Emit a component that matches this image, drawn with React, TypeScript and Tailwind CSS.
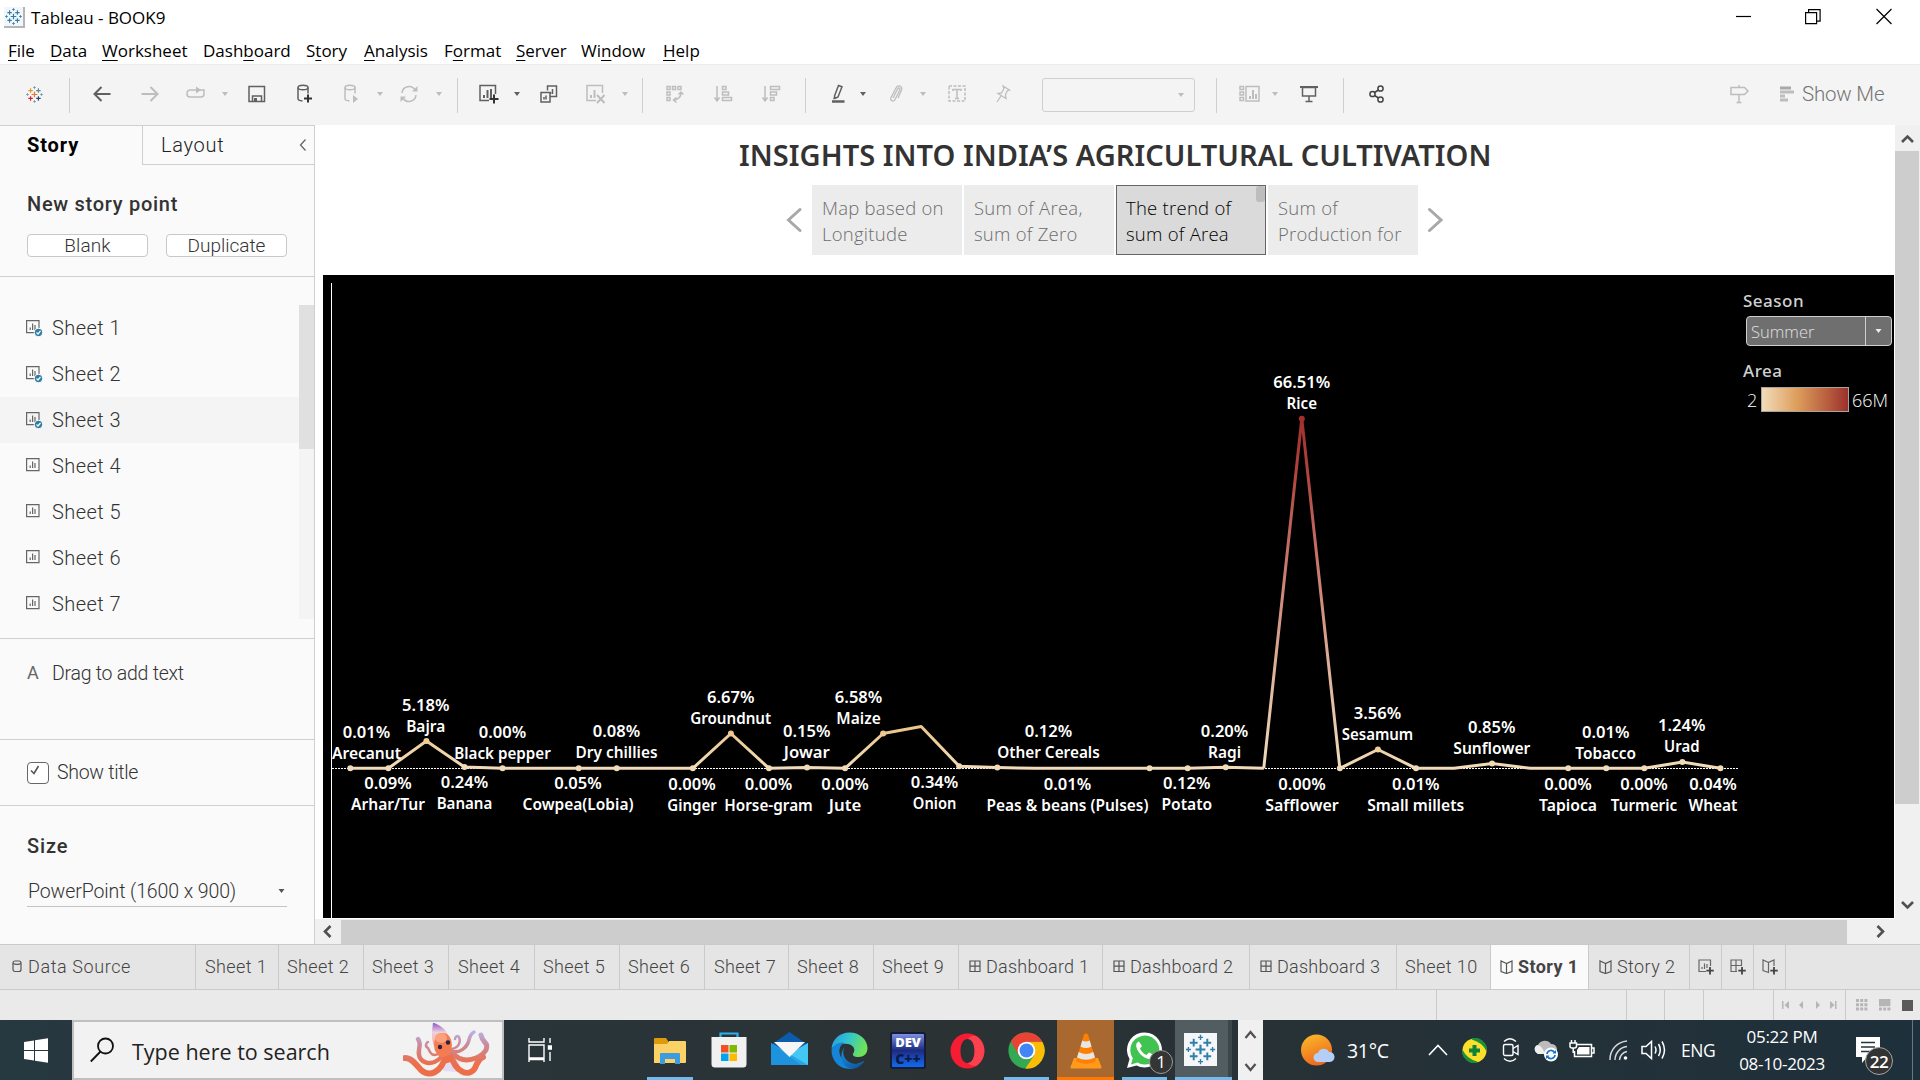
import React from "react";

type P = { className?: string; children?: React.ReactNode; w: number; h: number; c?: string; sw?: number; fill?: string };

function Svg({ className = "", children, w, h, c = "#606060", sw = 1.5, fill = "none" }: P) {
  return (
    <svg className={"block shrink-0 " + className} width={w} height={h} viewBox={`0 0 ${w} ${h}`} fill={fill} stroke={c} strokeWidth={sw}>
      {children}
    </svg>
  );
}

function Plus({ x, y, s, c, sw = 1.5 }: { x: number; y: number; s: number; c: string; sw?: number }) {
  return <path d={`M${x - s} ${y}h${2 * s}M${x} ${y - s}v${2 * s}`} stroke={c} strokeWidth={sw} fill="none" />;
}

function TableauMark({ size, className = "", colors }: { size: number; className?: string; colors: string[] }) {
  return (
    <svg className={"block shrink-0 " + className} width={size} height={size} viewBox="0 0 34 34">
      <Plus x={17} y={17} s={5} c={colors[0]} sw={2.2} />
      <Plus x={10} y={10} s={4} c={colors[1]} sw={2} />
      <Plus x={24} y={10} s={4} c={colors[2]} sw={2} />
      <Plus x={10} y={24} s={4} c={colors[3]} sw={2} />
      <Plus x={24} y={24} s={4} c={colors[4]} sw={2} />
      <Plus x={17} y={4.5} s={2.6} c={colors[5]} sw={1.4} />
      <Plus x={17} y={29.5} s={2.6} c={colors[5]} sw={1.4} />
      <Plus x={4.5} y={17} s={2.6} c={colors[5]} sw={1.4} />
      <Plus x={29.5} y={17} s={2.6} c={colors[5]} sw={1.4} />
    </svg>
  );
}

const BLUE = ["#2f7fab", "#2f7fab", "#2f7fab", "#2f7fab", "#2f7fab", "#2f7fab"];

function TitleBar() {
  return (
    <div className="flex h-[34px] items-start bg-white">
      <div className="ml-1 mt-[7px] h-[21px] w-[21px] border-b-2 border-r-2 border-[#b5b5b5] bg-[#f3f6f8]">
        <TableauMark size={19} colors={BLUE} />
      </div>
      <div className="ml-1.5 mt-1.5 whitespace-nowrap font-['Open_Sans'] text-[17px] leading-6 tracking-[-0.03px] text-black">Tableau - BOOK9</div>
      <div className="ml-auto flex">
        <Svg w={16} h={30} c="#000" sw={1.2} className="mr-[53px]"><path d="M0 16.5h15" /></Svg>
        <Svg w={16} h={30} c="#000" sw={1.2} className="mr-[55px]"><path d="M.6 12.6h11v11H.6zM3.6 12.6v-3h11.5v11.500h-3.500" /></Svg>
        <Svg w={16} h={30} c="#000" sw={1.2} className="mr-7"><path d="M.5 9l15 15M15.500 9l-15 15" /></Svg>
      </div>
    </div>
  );
}

const menu: [string, string, string, string][] = [
  ["", "F", "ile", "w-[42px]"],
  ["", "D", "ata", "w-[52px]"],
  ["", "W", "orksheet", "w-[101px]"],
  ["Dash", "b", "oard", "w-[103px]"],
  ["S", "t", "ory", "w-[58px]"],
  ["", "A", "nalysis", "w-[80px]"],
  ["F", "o", "rmat", "w-[72px]"],
  ["", "S", "erver", "w-[65px]"],
  ["Wi", "n", "dow", "w-[82px]"],
  ["", "H", "elp", "w-[50px]"],
];

function MenuBar() {
  return (
    <div className="flex h-[30px] bg-white pl-2 font-['Open_Sans'] text-[17px] leading-[33px] text-black">
      {menu.map(([a, u, b, w]) => (
        <div key={a + u + b} className={"whitespace-nowrap " + w}>
          {a}
          <span className="underline underline-offset-[3px]">{u}</span>
          {b}
        </div>
      ))}
    </div>
  );
}

const D = "#606060";
const L = "#bdbdbd";

function Caret({ className = "", c = L, w = 6 }: { className?: string; c?: string; w?: number }) {
  return (
    <svg className={"block shrink-0 " + className} width={w} height={4} viewBox="0 0 6 4">
      <path d="M0 0h6L3 4z" fill={c} />
    </svg>
  );
}

function Sep({ className = "" }: { className?: string }) {
  return <div className={"h-[35px] w-px shrink-0 bg-[#cfcfcf] " + className} />;
}

function Toolbar() {
  return (
    <div className="flex h-[61px] items-center border-t border-[#ececec] bg-[#f4f4f4] [&>svg]:-translate-y-px">
      <TableauMark size={19} className="ml-[25px]" colors={["#e8762c", "#eb912c", "#5c8a9a", "#c72037", "#1f457e", "#7099a6"]} />
      <Sep className="ml-[25px]" />
      <Svg w={18} h={18} c={D} sw={2} className="ml-[23px]"><path d="M17.500 9H2M8.500 2L1.500 9l7 7" /></Svg>
      <Svg w={18} h={18} c={L} sw={2} className="ml-[30px]"><path d="M.5 9H16M9.500 2l7 7-7 7" /></Svg>
      <Svg w={19} h={18} c={L} className="ml-[27px]"><path d="M10 5H4a3 3 0 0 0-3 3v1a3 3 0 0 0 3 3h11a3 3 0 0 0 3-3V5h-6" /><path d="M10 1.500v7L15 5z" fill={L} stroke="none" /></Svg>
      <Caret className="ml-[17px]" />
      <Svg w={18} h={18} c={D} className="ml-5"><path d="M1 1.500h15.500v15H1zM4.500 16.500v-5.500h9v5.500" /><path d="M6 13h3v3.500H6z" fill={D} stroke="none" /></Svg>
      <Svg w={16} h={20} c={D} className="ml-[31px]"><ellipse cx="6" cy="3.500" rx="5" ry="2.300" /><path d="M1 3.500v11c0 1.300 2 2.300 4.500 2.400M11 3.500v6" /><path d="M11 10.500v8M7 14.500h8" stroke="#333" strokeWidth="2" /></Svg>
      <Svg w={16} h={20} c={L} className="ml-[31px]"><ellipse cx="6" cy="3.500" rx="5" ry="2.300" /><path d="M1 3.500v11c0 1.300 2 2.300 4.500 2.400M11 3.500v6" /><path d="M9 11l5 4-5 4z" fill={L} stroke="none" /></Svg>
      <Caret className="ml-[17px]" />
      <Svg w={18} h={18} c={L} className="ml-[17px]"><path d="M2 8a7 7 0 0 1 13-3M16 10a7 7 0 0 1-13 3" /><path d="M12 6.500h5.500V1zM6 11.500H.5V17z" fill={L} stroke="none" /></Svg>
      <Caret className="ml-[18px]" />
      <Sep className="ml-[15px]" />
      <Svg w={20} h={20} c={D} className="ml-[21px]"><path d="M10 16.500H1v-15h15.500V10" /><path d="M5 14v-3M8.500 14V6M12 14V5" strokeWidth="2" /><path d="M15 10.500v9M10.500 15h9" stroke="#333" strokeWidth="2" /></Svg>
      <Caret className="ml-[15px]" c={D} />
      <Svg w={18} h={18} c={D} className="ml-5 -mt-px"><path d="M7.500 5.500V1h9v10.500H10M1 7.500h9v9.500H1zM4 14.500v-2.500M6 14.500v-4M10.500 9V7M12.500 9V4" /></Svg>
      <Svg w={20} h={20} c={L} className="ml-[28px]"><path d="M10 16.500H1v-15h15.500V9" /><path d="M5 14v-3M8.500 14V6" strokeWidth="2" /><path d="M11 11l7.500 8M18.500 11l-7.500 8" strokeWidth="2" /></Svg>
      <Caret className="ml-[16px]" />
      <Sep className="ml-[14px]" />
      <Svg w={18} h={18} c={L} className="ml-[23px]"><path d="M1 1.500h3v3H1zM6.500 1.500h3v3h-3zM12 1.500h3v3h-3zM1 7h3v3H1zM1 12.500h3v3H1zM15 7.500c0 5-3 7-7 7.500M12.500 9.500L15 7l2.500 2.500M10.500 12.500L7.500 15l3 2.500" /></Svg>
      <Svg w={19} h={18} c={L} className="ml-[30px]"><path d="M3 1v15M.5 12.500L3 16l2.500-3.500M8.500 1.500h3.500v3H8.500zM8.500 7h6v3h-6zM8.500 12.500h9v3h-9z" /></Svg>
      <Svg w={19} h={18} c={L} className="ml-[29px]"><path d="M3 1v15M.5 12.500L3 16l2.500-3.500M8.500 1.500h9v3h-9zM8.500 7h6v3h-6zM8.500 12.500h3.500v3H8.500z" /></Svg>
      <Sep className="ml-[24px]" />
      <Svg w={15} h={20} c={D} className="ml-[25px]"><path d="M3.500 12L7.500 1.500l3.500 1.300L7 13l-3 1.500z" /><path d="M1 17.500h12.500" strokeWidth="2.500" /><path d="M3 12.500l-1 3 3-1.500z" fill={D} stroke="none" /></Svg>
      <Caret className="ml-[14px]" c={D} />
      <Svg w={14} h={18} c={L} className="ml-[23px]" sw={1.300}><path d="M4 13L8.500 4c1-1.800 3 -.8 2.300 1L6 14.500c-1.500 3-5.500 1-4-2L7 3c2-4 7-1.500 5.500 2L9 13" /></Svg>
      <Caret className="ml-[17px]" />
      <Svg w={18} h={18} c={L} className="ml-[22px]"><path d="M1 1h16v15H1z" strokeDasharray="3 1.500" /><path d="M5 6V4.500h8V6M9 4.500v9M7 13.500h4" /></Svg>
      <Svg w={15} h={18} c={L} className="ml-[30px]" sw={1.300}><path d="M7 1l6.500 4-2 .5-2 4 .5 4-8-5L5.500 8 8 3.500zM5 11L1 17" /></Svg>
      <div className="ml-[31px] flex h-[34px] w-[153px] shrink-0 items-center justify-end rounded-[3px] border border-[#cfcfcf] pr-[10px]">
        <Caret />
      </div>
      <Sep className="ml-[21px]" />
      <Svg w={21} h={18} c={L} className="ml-[22px]"><path d="M1 1.500h3.500v3H1zM1 7h3.500v3H1zM1 12.500h3.500v3H1zM7 1.500h13v14.500H7z" /><path d="M11 14v-3M14 14V5M17 14V9" strokeWidth="2" /></Svg>
      <Caret className="ml-[12px]" />
      <Svg w={18} h={18} c={D} className="ml-[22px]"><path d="M0 2h18" strokeWidth="2" /><path d="M2.500 2.500h13v8.500h-13zM9 11v5.500M5.500 16.500h7" /></Svg>
      <Sep className="ml-[25px]" />
      <Svg w={16} h={18} c="#444" className="ml-[25px]"><circle cx="3.500" cy="9" r="2.600" /><circle cx="11.500" cy="3.500" r="2.600" /><circle cx="11.500" cy="14.500" r="2.600" /><path d="M5.500 7.500l4-2.500M5.500 10.500l4 2.500" /></Svg>
      <Svg w={19} h={20} c={L} className="ml-[345px]"><path d="M1 3.500h13.500l3.500 3.500-3.500 3.500H1zM9 1v2.500M9 10.500V18M6.500 18.500h5" /></Svg>
      <Svg w={15} h={18} c={L} sw={3} className="ml-[31px]"><path d="M0 3h11" stroke="#a9a9a9" /><path d="M0 7h14M0 11h5M0 15h8" /></Svg>
      <div className="-mt-0.5 ml-[7px] whitespace-nowrap font-[Roboto] text-[20.500px] font-light tracking-[-0.2px] text-[#757575]">Show Me</div>
    </div>
  );
}

function SheetIcon({ used }: { used: boolean }) {
  return (
    <Svg w={17} h={17} c="#666" sw={1.200} className="ml-[26px] mt-px">
      <path d="M.6.6h12.400v12H.6z" />
      <path d="M4.200 10V7.500M6.600 10V3.500M9 10V5" />
      {used && (
        <>
          <circle cx="12.500" cy="12.500" r="4.200" fill="#2f7ea1" stroke="#fafafa" strokeWidth="1" />
          <path d="M10.500 12.500l1.500 1.500 2.500-3" stroke="#fff" />
        </>
      )}
    </Svg>
  );
}

function Sidebar() {
  return (
    <div className="flex h-[819px] w-[315px] shrink-0 flex-col border-r border-t border-[#cfcfcf] bg-[#fafafa] font-[Roboto] text-[20px] font-light text-[#333]">
      <div className="flex h-[39px] leading-[39px]">
        <div className="w-[142px] pl-[27px] font-bold tracking-[0.9px] text-black">Story</div>
        <div className="flex flex-1 items-center justify-between border-b border-l border-[#cfcfcf] pl-[18px] pr-[7px] tracking-[0.700px] text-[#222]">
          Layout
          <Svg w={8} h={14} c="#666" sw={1.300}><path d="M6.500 1.500L1.500 7l5 5.500" /></Svg>
        </div>
      </div>
      <div className="flex h-[112px] flex-col border-b border-[#cfcfcf] pl-[27px]">
        <div className="mt-[27px] h-6 font-medium leading-6 tracking-[0.720px]">New story point</div>
        <div className="mt-[18px] flex gap-[18px] text-center text-[19px] leading-[21px]">
          <div className="h-[23px] w-[121px] rounded-sm border border-[#c8c8c8] bg-white tracking-[0.1px]">Blank</div>
          <div className="h-[23px] w-[121px] rounded-sm border border-[#c8c8c8] bg-white">Duplicate</div>
        </div>
      </div>
      <div className="flex h-[362px] border-b border-[#cfcfcf] pt-7">
        <div className="flex-1">
          {[1, 2, 3, 4, 5, 6, 7].map((n) => (
            <div key={n} className={"flex h-[46px] items-center " + (n === 3 ? "bg-[#f4f4f4]" : "")}>
              <SheetIcon used={n < 4} />
              <span className="ml-[9px] tracking-[0.450px]">Sheet {n}</span>
            </div>
          ))}
        </div>
        <div className="h-[314px] w-[15px] bg-[#f4f4f4]">
          <div className="h-36 bg-[#e0e0e0]" />
        </div>
      </div>
      <div className="flex h-[101px] border-b border-[#cfcfcf] pl-[27px] pt-5">
        <span className="w-[25px] font-normal leading-[28px] text-[18px] text-[#666]">A</span>
        <span className="text-[19.500px] leading-[29px] tracking-[-0.250px]">Drag to add text</span>
      </div>
      <div className="flex h-[66px] items-center border-b border-[#cfcfcf] pl-[27px]">
        <div className="h-[22px] w-[22px] rounded-sm border border-[#666] bg-white">
          <Svg w={14} h={14} c="#555" sw={1.600}><path d="M3 7.500l3 3L10.500 3" /></Svg>
        </div>
        <span className="ml-2 text-[19.500px] tracking-[-0.300px]">Show title</span>
      </div>
      <div className="pl-[27px] pr-[27px]">
        <div className="mt-[26px] h-6 font-medium leading-7 tracking-[0.900px]">Size</div>
        <div className="mt-[16px] flex h-[35px] items-center justify-between border-b border-[#c4c4c4] pl-px pr-[2px]">
          <span className="mt-[5px] whitespace-nowrap text-[19.500px] leading-[30px] tracking-[-0.100px]">PowerPoint (1600 x 900)</span>
          <Caret c="#555" w={7} className="mt-1" />
        </div>
      </div>
    </div>
  );
}

const points = ["Map based on|Longitude", "Sum of Area,|sum of Zero", "The trend of|sum of Area", "Sum of|Production for"];

type Lab = [string, string, number, number, number];
const labels: Lab[] = [
  ["0.01%", "Arecanut", 366.5, 737, 69],
  ["5.18%", "Bajra", 425.7, 710, 39],
  ["0.00%", "Black pepper", 502.5, 737, 96.5],
  ["0.08%", "Dry chillies", 616.5, 736, 82],
  ["6.67%", "Groundnut", 730.7, 702, 81],
  ["0.15%", "Jowar", 806.8, 736, 46],
  ["6.58%", "Maize", 858.6, 702, 44.5],
  ["0.09%", "Arhar/Tur", 388, 788, 74],
  ["0.24%", "Banana", 464.5, 787, 55.7],
  ["0.05%", "Cowpea(Lobia)", 578, 788, 111],
  ["0.00%", "Ginger", 692, 789, 49.6],
  ["0.00%", "Horse-gram", 768.5, 789, 88.5],
  ["0.00%", "Jute", 845, 789, 32.5],
  ["0.34%", "Onion", 934.6, 787, 43.5],
  ["0.12%", "Other Cereals", 1048.5, 736, 102.5],
  ["0.01%", "Peas & beans (Pulses)", 1067.5, 789, 162],
  ["0.12%", "Potato", 1186.8, 788, 50.7],
  ["0.20%", "Ragi", 1224.6, 736, 33],
  ["66.51%", "Rice", 1301.8, 387, 30.4],
  ["0.00%", "Safflower", 1302, 789, 73.6],
  ["3.56%", "Sesamum", 1377.5, 718, 71.5],
  ["0.01%", "Small millets", 1415.7, 789, 97],
  ["0.85%", "Sunflower", 1491.8, 732, 77],
  ["0.00%", "Tapioca", 1568, 789, 58],
  ["0.01%", "Tobacco", 1605.7, 737, 60.7],
  ["0.00%", "Turmeric", 1644, 789, 66.4],
  ["1.24%", "Urad", 1681.8, 730, 35.4],
  ["0.04%", "Wheat", 1712.9, 789, 49],
];

const ys: Record<number, number> = { 2: 741, 3: 767, 10: 733.5, 12: 767.5, 14: 733.5, 15: 726.5, 16: 766.3, 17: 767.5, 23: 767.3, 25: 418.7, 27: 749.5, 30: 763.5, 35: 762 };
const hidden = [5, 8, 15, 18, 19, 20, 24, 29, 31];
const px = (i: number) => 350.3 + 38.06 * i;
const py = (i: number) => ys[i] ?? 768.3;
const path = (a: number, b: number) => Array.from({ length: b - a + 1 }, (_, k) => `${px(a + k)},${py(a + k)}`).join(" ");

function Chart() {
  return (
    <svg className="block h-[643px] w-[1571px]" viewBox="323 275 1571 643">
      <defs>
        <linearGradient id="low" gradientUnits="userSpaceOnUse" x1="0" x2="0" y1="768" y2="726">
          <stop offset="0" stopColor="#f0dcba" />
          <stop offset="1" stopColor="#ecc588" />
        </linearGradient>
        <linearGradient id="peak" gradientUnits="userSpaceOnUse" x1="0" x2="0" y1="768" y2="418">
          <stop offset="0" stopColor="#f0dcba" />
          <stop offset="0.300" stopColor="#dcae98" />
          <stop offset="0.600" stopColor="#c67569" />
          <stop offset="0.850" stopColor="#ae433d" />
          <stop offset="1" stopColor="#a12f2d" />
        </linearGradient>
      </defs>
      <path d="M331.500 283V918" stroke="#fff" strokeWidth="1" />
      <path d="M332 768.500H1739" stroke="#fff" strokeWidth="1" strokeDasharray="2 1" />
      <g fill="none" strokeWidth="3" strokeLinejoin="round">
        <polyline points={path(0, 24)} stroke="url(#low)" />
        <polyline points={path(26, 36)} stroke="url(#low)" />
        <polyline points={path(24, 26)} stroke="url(#peak)" />
      </g>
      {Array.from({ length: 37 }, (_, i) => i)
        .filter((i) => !hidden.includes(i))
        .map((i) => (
          <circle key={i} cx={px(i)} cy={py(i)} r={3} fill={i === 25 ? "#a12f2d" : "url(#low)"} />
        ))}
      <g fill="#fff" textAnchor="middle" className="font-['Noto_Sans'] text-[15.500px] font-semibold">
        {labels.map(([p, n, x, y, w]) => (
          <React.Fragment key={n}>
            <text x={x} y={y + 0.5} textLength={p.length > 5 ? 57 : 47.5} lengthAdjust="spacingAndGlyphs">{p}</text>
            <text x={x} y={y + 22.3} textLength={w} lengthAdjust="spacingAndGlyphs">{n}</text>
          </React.Fragment>
        ))}
      </g>
    </svg>
  );
}

function Legend() {
  return (
    <div className="absolute right-0 top-0 flex w-[151px] flex-col pt-[14px] font-['Noto_Sans'] text-[17px] text-[#d0d0d0]">
      <div className="h-[24px] font-medium leading-[24px] tracking-[0.5px]">Season</div>
      <div className="ml-[3px] mt-[3px] flex h-[30px] w-[146px] rounded-sm border border-[#cfcfcf] bg-[#6f6f6f]">
        <div className="w-[119px] border-r border-[#cfcfcf] pl-1 font-['Open_Sans'] text-[16.500px] font-light leading-[30px] text-[#e0e0e0]">Summer</div>
        <div className="flex flex-1 items-center justify-center"><Caret c="#eee" w={7} /></div>
      </div>
      <div className="mt-[13px] h-[24px] font-medium leading-[24px] tracking-[0.5px]">Area</div>
      <div className="mt-1 flex h-[25px] items-center pl-1 font-['Open_Sans'] text-[18px] font-light text-white">
        <span className="mt-0.5 w-[14px]">2</span>
        <div className="h-[25px] w-[88px] border border-[#a9a59c] bg-gradient-to-r from-[#f0dcba] via-[#de9f5c] via-40% to-[#9c2f2d]" />
        <span className="ml-[3px] mt-0.5">66M</span>
      </div>
    </div>
  );
}

function StoryView() {
  return (
    <div className="flex h-[819px] w-[1580px] flex-col bg-white">
      <div className="mt-[11px] h-[39px] pl-[424px]">
        <div className="whitespace-nowrap font-['Noto_Sans'] text-[29px] font-semibold leading-[38px] tracking-[0.040px] text-[#333]">INSIGHTS INTO INDIA’S AGRICULTURAL CULTIVATION</div>
      </div>
      <div className="mt-2.5 flex items-center pl-[471px]">
        <Svg w={16} h={26} c="#a8a8a8" sw={3}><path d="M14 2.500L2.500 13 14 23.500" strokeLinecap="round" /></Svg>
        <div className="ml-2.5 flex gap-0.5 font-['Open_Sans'] text-[18.500px] font-light leading-[26px] tracking-[0.250px] text-[#6c6c6c]">
          {points.map((t, i) => (
            <div
              key={t}
              className={"relative h-[70px] w-[150px] whitespace-nowrap border pl-[9px] pt-[9px] " + (i === 2 ? "border-[#666] bg-[#dadada] text-black" : "border-[#ececec] bg-[#ececec]")}
            >
              <div>{t.split("|")[0]}</div>
              <div>{t.split("|")[1]}</div>
              {i === 2 && <div className="absolute right-0 top-0 h-4 w-[9px] rounded-[3px] bg-[#bdbdbd]" />}
            </div>
          ))}
        </div>
        <Svg w={16} h={26} c="#a8a8a8" sw={3} className="ml-[9px]"><path d="M2.500 2.500L14 13 2.500 23.500" strokeLinecap="round" /></Svg>
      </div>
      <div className="relative ml-2 mt-5 h-[643px] w-[1571px] bg-black">
        <Chart />
        <Legend />
      </div>
      <div className="mt-px flex h-[25px] items-center bg-[#f0f0f0]">
        <Svg w={26} h={25} c="#505050" sw={2.600}><path d="M15.500 7L10 12.500l5.500 5.500" /></Svg>
        <div className="h-6 w-[1506px] bg-[#cdcdcd]" />
        <Svg w={46} h={25} c="#505050" sw={2.600} className="ml-auto"><path d="M28.500 7l5.500 5.500-5.500 5.500" /></Svg>
      </div>
    </div>
  );
}

function VScroll() {
  return (
    <div className="flex h-[819px] w-[25px] flex-col bg-[#f0f0f0]">
      <Svg w={25} h={26} c="#505050" sw={2.600}><path d="M7 17l5.500-5.500L18 17" /></Svg>
      <div className="h-[653px] w-6 bg-[#cdcdcd]" />
      <Svg w={25} h={26} c="#505050" sw={2.600} className="mt-[89px]"><path d="M7 9l5.500 5.500L18 9" /></Svg>
    </div>
  );
}

const tabs: [string, string, string][] = [
  ["Data Source", "w-[196px] pl-[11px]", "db"],
  ["Sheet 1", "w-[83px] pl-[9px]", ""],
  ["Sheet 2", "w-[85px] pl-[8px]", ""],
  ["Sheet 3", "w-[85px] pl-[8px]", ""],
  ["Sheet 4", "w-[86px] pl-[9px]", ""],
  ["Sheet 5", "w-[85px] pl-[8px]", ""],
  ["Sheet 6", "w-[85px] pl-[8px]", ""],
  ["Sheet 7", "w-[84px] pl-[9px]", ""],
  ["Sheet 8", "w-[85px] pl-[8px]", ""],
  ["Sheet 9", "w-[85px] pl-[8px]", ""],
  ["Dashboard 1", "w-[144px] pl-[10px]", "dash"],
  ["Dashboard 2", "w-[147px] pl-[10px]", "dash"],
  ["Dashboard 3", "w-[147px] pl-[10px]", "dash"],
  ["Sheet 10", "w-[94px] pl-[8px]", ""],
  ["Story 1", "w-[98px] pl-[9px]", "story"],
  ["Story 2", "w-[101px] pl-[10px]", "story"],
];

const BOOK = "M6.500 3.500L1 1v10.500l5.500 2 5.500-2V1z";

function TabIcon({ kind }: { kind: string }) {
  if (kind === "db") return <Svg w={11} h={13} c="#555" sw={1.200} className="mr-[6px]"><rect x="2" y="1" width="8" height="10.500" rx="2" /><path d="M2 3.500c2 1.200 6 1.200 8 0" /></Svg>;
  if (kind === "dash") return <Svg w={12} h={13} c="#555" sw={1.200} className="mr-[5px]"><path d="M1 1h10v10.500H1zM6 1v10.500M1 6.200h10" /></Svg>;
  if (kind === "story") return <Svg w={13} h={14} c="#555" sw={1.200} className="mr-[5px]"><path d={BOOK} /><path d="M6.500 3.500v10" /></Svg>;
  return null;
}

function trackingFor(t: string) {
  if (t === "Data Source") return "tracking-[0.600px]";
  if (t.startsWith("Dashboard")) return "tracking-[0.250px]";
  return "tracking-[0.400px]";
}

function Tabs() {
  return (
    <div className="flex h-[46px] border-b border-t border-[#cacaca] bg-[#e5e5e5] font-[Roboto] text-[18px] font-light text-[#444]">
      {tabs.map(([t, w, k]) => (
        <div key={t} className={"flex shrink-0 items-center whitespace-nowrap border-r border-[#cacaca] pb-px " + w + (t === "Story 1" ? " bg-[#fafafa] font-bold" : "")}>
          <TabIcon kind={k} />
          <span className={trackingFor(t)}>{t}</span>
        </div>
      ))}
      <div className="flex w-8 items-center justify-center border-r border-[#cacaca]">
        <Svg w={16} h={16} c="#666" sw={1.200}><path d="M8 12.500H1V1h11.500v6M4 10V8M6.500 10V4.500M9 9V5" /><path d="M12 8v7.500M8.300 11.700h7.500" stroke="#444" strokeWidth="1.800" /></Svg>
      </div>
      <div className="flex w-8 items-center justify-center border-r border-[#cacaca]">
        <Svg w={16} h={16} c="#666" sw={1.200}><path d="M7 12.500H1V1h10.500v6M6 1v11M1 6.500h10" /><path d="M12 8v7.500M8.300 11.700h7.500" stroke="#444" strokeWidth="1.800" /></Svg>
      </div>
      <div className="flex w-8 items-center justify-center border-r border-[#cacaca]">
        <Svg w={16} h={16} c="#666" sw={1.200}><path d="M6.500 3.500L1 1v10.500l5.500 2V3.500L12 1v6" /><path d="M12 8v7.500M8.300 11.700h7.500" stroke="#444" strokeWidth="1.800" /></Svg>
      </div>
    </div>
  );
}

function Status() {
  return (
    <div className="flex h-[30px] items-center bg-[#eaeaea] pl-[1436px]">
      <div className="h-[30px] w-[190px] border-l border-[#cacaca]" />
      <div className="h-[30px] w-[38px] border-l border-[#cacaca]" />
      <div className="h-[30px] w-[39px] border-l border-[#cacaca]" />
      <div className="h-[30px] w-[70px] border-l border-[#cacaca]" />
      <div className="flex h-[30px] w-[73px] items-center border-x border-[#cacaca] pl-[8px]">
        <Svg w={56} h={10} c="none" fill="#b5b5b5"><path d="M0 1h1.500v8H0zM7 1v8L2.500 5zM21 1v8L17 5zM34 1v8l4-4zM48 1v8l4.500-4zM53 1h1.500v8H53z" /></Svg>
      </div>
      <Svg w={12} h={12} c="none" fill="#b5b5b5" className="ml-[10px]"><path d="M0 0h3v3H0zM4.200 0h3v3h-3zM8.400 0h3v3h-3zM0 4.200h3v3H0zM4.200 4.200h3v3h-3zM8.400 4.200h3v3h-3zM0 8.400h3v3H0zM4.200 8.400h3v3h-3zM8.400 8.400h3v3h-3z" /></Svg>
      <Svg w={12} h={12} c="none" fill="#b5b5b5" className="ml-[11px]"><path d="M0 0h11.400v7.200H0zM0 8.400h3v3H0zM4.200 8.400h3v3h-3zM8.400 8.400h3v3h-3z" /></Svg>
      <div className="ml-[11px] h-[11px] w-[11px] bg-[#5a5a5a]" />
    </div>
  );
}

function Octopus() {
  return (
    <svg className="block shrink-0" width="90" height="56" viewBox="0 0 90 56" fill="none" strokeLinecap="round">
      <defs>
        <linearGradient id="oct" x1="0" y1="0" x2="0" y2="56" gradientUnits="userSpaceOnUse">
          <stop offset="0.150" stopColor="#b9b5ea" />
          <stop offset="0.400" stopColor="#c98b9e" />
          <stop offset="0.750" stopColor="#ec6f4a" />
        </linearGradient>
        <linearGradient id="head" x1="0" y1="0" x2="0" y2="1">
          <stop offset="0" stopColor="#8d59c4" />
          <stop offset="0.400" stopColor="#efd0e0" />
          <stop offset="1" stopColor="#f7a58a" />
        </linearGradient>
      </defs>
      <path d="M42 34L58 36L54 50L40 49z" fill="#e3dcf5" />
      <g stroke="url(#oct)">
        <path d="M43 33C38 52 26 55 18 48C12 41 8 36 2 36" strokeWidth="6" />
        <path d="M40 33C30 46 14 42 16 28C17 22 17 20 15 17" strokeWidth="4.500" />
        <path d="M38 31C28 36 27 30 25 26C21 24 24 20 25 20" strokeWidth="2.500" />
        <path d="M48 33C52 50 66 56 72 46C76 36 78 36 80 35" strokeWidth="6" />
        <path d="M50 31C60 44 78 36 83 28C86 20 80 22 78 13" strokeWidth="5" />
        <path d="M48 29C56 32 64 26 66 18C67 13 69 11 71 10" strokeWidth="3.500" />
        <path d="M48 27C56 26 58 20 56 15C54 12 52 16 52 17" strokeWidth="2.500" />
      </g>
      <path d="M40 32Q44 36 50 32L50 38Q44 44 39 39z" fill="#ee6f49" />
      <path d="M30 1C34 1 47 9 46 17C45 24 35 22 31 24C28 16 29 8 30 1z" fill="url(#head)" />
      <ellipse cx="40" cy="23" rx="9" ry="12" fill="#f47c50" />
      <ellipse cx="38" cy="16" rx="6" ry="5" fill="#f9a27c" />
      <circle cx="37" cy="25" r="2.200" fill="#2b2140" />
      <circle cx="45" cy="20.500" r="2.200" fill="#2b2140" />
    </svg>
  );
}

function Slot({ className = "", children }: { className?: string; children: React.ReactNode }) {
  return <div className={"flex h-[60px] shrink-0 items-center justify-center border-b-[3px] " + className}>{children}</div>;
}

function Taskbar() {
  return (
    <div className="flex h-[60px] bg-gradient-to-r from-[#263840] via-[#2b3234] to-[#1e303b]">
      <div className="flex w-[72px] items-center justify-center">
        <Svg w={24} h={25} c="none" fill="#fff"><path d="M0 4l10-1.600V12H0zM11 2.200L24 .3V12H11zM0 13h10v9.600L0 21zM11 13h13v11.700L11 22.800z" /></Svg>
      </div>
      <div className="flex h-[60px] w-[432px] items-center border-2 border-[#bfbfbf] bg-[#f2f2f2]">
        <Svg w={26} h={26} c="#111" sw={1.800} className="ml-4"><circle cx="15.500" cy="9" r="7.500" /><path d="M10.500 14.500L.8 24.500" /></Svg>
        <div className="ml-4 mt-[3px] w-[271px] whitespace-nowrap font-['Open_Sans'] text-[21.500px] leading-[50px] text-[#222]">Type here to search</div>
        <Octopus />
      </div>
      <Svg w={24} h={60} c="#fff" sw={1.400} className="ml-6"><path d="M1 18v4h15v-4M1 25h15v13H1zM1 42v-2.500h15v2.500M22 18v5M22 32v9" /><path d="M20.500 26h3v3h-3z" fill="#fff" /></Svg>

      <Slot className="ml-[95px] w-[46px] border-[#76b9ed]">
        <svg width="34" height="28" viewBox="0 0 34 28" className="mt-1"><path d="M1 2q0-1 1-1h11l2 3v5H1z" fill="#dc9a0c" /><path d="M1 7h13l2-3h16q1 0 1 1v20q0 1-1 1H1z" fill="#fcd267" /><path d="M7 27V17q0-1 1-1h18q1 0 1 1v10h-5v-5h-10v5z" fill="#3d9be0" /></svg>
      </Slot>
      <Slot className="ml-[18px] w-[36px] border-transparent">
        <svg width="36" height="38" viewBox="0 0 36 38" className="mt-[3px]"><path d="M9.500 8V2.500h17V8" fill="none" stroke="#2cb1f0" strokeWidth="2.200" /><path d="M0.500 6h35v27q0 3.500-3.500 3.500H4Q.5 36.500.5 33z" fill="#f1f1f1" /><path d="M10 14h7.500v7.500H10z" fill="#f25022" /><path d="M18.500 14H26v7.500h-7.500z" fill="#7fba00" /><path d="M10 22.500h7.500V30H10z" fill="#00a4ef" /><path d="M18.500 22.500H26V30h-7.500z" fill="#ffb900" /></svg>
      </Slot>
      <Slot className="ml-[24px] w-[37px] border-transparent">
        <svg width="37" height="35" viewBox="0 0 37 35"><path d="M0 14L18.500 1 37 14v4H0z" fill="#0b5cad" /><path d="M0 12l18.500 11L37 12v22H0z" fill="#27a5e8" /><path d="M18.500 23L37 12v22z" fill="#42c8f2" /><path d="M0 12l30 22H0z" fill="#1d93dd" /><path d="M3 11h31L18.500 26z" fill="#f6f6f6" /></svg>
      </Slot>
      <Slot className="ml-[23px] w-[37px] border-transparent">
        <svg width="37" height="37" viewBox="0 0 37 37" className="mt-1">
          <defs>
            <linearGradient id="e1" x1="0" y1="0" x2="1" y2="0.300"><stop offset="0.100" stopColor="#2b9fe0" /><stop offset="0.500" stopColor="#31c5cf" /><stop offset="1" stopColor="#6ee25a" /></linearGradient>
            <linearGradient id="e2" x1="0" y1="0" x2="1" y2="1"><stop offset="0" stopColor="#1a8fdb" /><stop offset="1" stopColor="#0c4f9c" /></linearGradient>
          </defs>
          <path d="M0.500 17C1 7 9 .5 18.500.5c11 0 18 8 18 15.500 0 6-4 9-9 9-4 0-7-1.500-5-4 2-3 .5-8-5.500-9C10 11 3 13 .5 17z" fill="url(#e1)" />
          <path d="M.5 18C2 13 7 10 13 10.500c-4 3-5 7-4.500 10.500C9.500 28 17 33 25 32c3-.5 6-2 8-3-3 5-8.500 7.800-14.500 7.800C8 36.800.5 29 .5 18z" fill="#1585d8" />
          <path d="M13.500 15c-4 8 2 16.500 12 17 3 0 6-1.500 8-3-2 3-6 7-12 7.600C11 36 7 24 13.500 15z" fill="url(#e2)" />
        </svg>
      </Slot>
      <Slot className="ml-[22px] w-[36px] border-transparent">
        <div className="mt-1 flex h-[37px] w-9 flex-col items-center overflow-hidden rounded-[3px] border-2 border-[#151b38] bg-gradient-to-b from-[#7e8fe0] via-[#1c2b80] to-[#0b6cf0] font-['Open_Sans'] text-[13px] font-extrabold leading-[17px] text-white">
          <span>DEV</span>
          <span className="text-[14px] leading-[16px] text-[#071a4c]">C++</span>
        </div>
      </Slot>
      <Slot className="ml-[24px] w-[35px] border-transparent">
        <svg width="35" height="36" viewBox="0 0 35 36" className="mt-1"><path fillRule="evenodd" d="M17.500 0.500a17 17.500 0 1 0 0 35a17 17.500 0 1 0 0-35zM17.500 6c4.500 0 7 5 7 12s-2.500 12-7 12S10.500 25 10.500 18s2.500-12 7-12z" fill="#f51c33" /><path d="M17.500 30c4.500 0 7-5 7-12s-2.500-12-7-12q5-5 10-2.200A17 17.500 0 0 1 27.500 32q-5 2.500-10-2z" fill="#ff5a5f" opacity="0.600" /></svg>
      </Slot>
      <Slot className="ml-[19px] w-[45px] border-[#76b9ed]">
        <svg width="37" height="37" viewBox="0 0 48 48" className="mt-1"><circle cx="24" cy="24" r="23.500" fill="#34a853" /><path d="M24 12.500h20.500A23.500 23.500 0 0 1 22.500 47.500L34 30z" fill="#fbbc05" /><path d="M24 .5A23.500 23.500 0 0 1 44.500 12.500H24L14 30 3.700 12A23.500 23.500 0 0 1 24 .5z" fill="#ea4335" /><circle cx="24" cy="24" r="11.500" fill="#fff" /><circle cx="24" cy="24" r="9" fill="#4285f4" /></svg>
      </Slot>
      <Slot className="ml-[8px] w-[57px] border-[#ff7800] bg-[#a8682f]">
        <svg width="32" height="36" viewBox="0 0 32 36" className="mt-1"><path d="M4 25h24l3.500 9q.2 1.500-1 1.500H1.500q-1.200 0-1-1.500z" fill="#ff9a1a" /><path d="M14 1.500q2-2 4 0L26 28q-10 6-20 0z" fill="#ff8000" /><path d="M12.300 7.500q3.700 2 7.400 0l1.800 6q-5.500 3-11 0zM8.700 19q7.300 4 14.600 0l1.700 5.500q-9 4.500-18 0z" fill="#e6e6e6" /></svg>
      </Slot>
      <Slot className="relative ml-[8px] w-[45px] border-[#76b9ed]">
        <svg width="37" height="37" viewBox="0 0 37 37" className="mt-1"><path d="M1 36L3.500 27A17.500 17.500 0 1 1 10.500 33.500z" fill="#fff" /><path d="M5 32.500l1.800-6.300A14.500 14.500 0 1 1 11.500 30.600z" fill="#40c351" /><path d="M13 9.500c-2 .5-3.500 3-2.500 6 2 6 6.500 10 12 11.500 3 .5 5-1.500 5.500-4l-5-2.500-2.500 2.500c-3-1-5.500-4-6.500-6.500l2-2.500z" fill="#fff" /></svg>
        <div className="absolute left-[27px] top-[30px] flex h-6 w-6 items-center justify-center rounded-full border border-[#9a9a9a] bg-[#353535] font-['Open_Sans'] text-[17px] text-white">1</div>
      </Slot>
      <Slot className="ml-[8px] w-[53px] border-[#76b9ed] bg-[#525d62]">
        <div className="-ml-0.5 mt-0.5 bg-[#f4f6f8]"><TableauMark size={33} colors={BLUE} /></div>
      </Slot>
      <Slot className="w-[4px] border-[#76b9ed] bg-[#3b464b]">{null}</Slot>

      <div className="ml-[6px] flex w-[25px] flex-col justify-between bg-[#f0f0f0] pb-[6px] pt-[9px]">
        <Svg w={25} h={12} c="#505050" sw={2.200}><path d="M7.500 9l5-6 5 6" /></Svg>
        <Svg w={25} h={12} c="#505050" sw={2.200}><path d="M7.500 2l5 6 5-6" /></Svg>
      </div>
      <div className="flex items-center font-['Open_Sans'] text-[18px] text-white">
        <svg width="34" height="34" viewBox="0 0 34 34" className="ml-[38px] block">
          <defs><linearGradient id="sun" x1="0" y1="0" x2="0.400" y2="1"><stop offset="0" stopColor="#fbbd2c" /><stop offset="1" stopColor="#ee6a1c" /></linearGradient></defs>
          <circle cx="15.500" cy="17" r="15.500" fill="url(#sun)" />
          <path d="M17 29a4.500 4.500 0 0 1 0-9 6 6 0 0 1 11-1 5 5 0 0 1 1 10z" fill="#b4cef8" />
        </svg>
        <div className="ml-[12px] mt-0.5 w-[82px] text-[19.500px] tracking-[-0.3px]">31°C</div>
        <Svg w={20} h={14} c="#fff" sw={1.600} className="-ml-px"><path d="M1 12L10 2.500 19 12" /></Svg>
        <svg width="25" height="25" viewBox="0 0 25 25" className="ml-[14px] block"><circle cx="12.500" cy="12.500" r="12" fill="#fbe02a" /><path d="M10 .7A12 12 0 0 1 24.500 12Q21 4 10 .7zM15 24.300A12 12 0 0 1 .5 13Q4 21 15 24.300z" fill="#1d8f3c" stroke="#1d8f3c" strokeWidth="1.500" /><path d="M12.500 7v11M7 12.500h11" stroke="#12803a" strokeWidth="4" /></svg>
        <Svg w={18} h={26} c="#fff" sw={1.400} className="ml-[15px]"><path d="M2 4.500Q8 -1 14 4.500M2 21.500q6 5.500 12 0" /><rect x="1.500" y="7.500" width="9.500" height="11" rx="1.500" /><path d="M11 11.500l5-3v9l-5-3" /></Svg>
        <svg width="26" height="24" viewBox="0 0 26 24" className="ml-[13px] block"><path d="M5 16a5 5 0 0 1 0-9 7.500 7.500 0 0 1 13-1 6 6 0 0 1 6 5v5z" fill="#bcbcbc" /><path d="M5 16a5 5 0 0 1-1-9q5 0 8 9z" fill="#eee" /><circle cx="18" cy="16.500" r="7" fill="#fff" /><path d="M14 16a4 4 0 0 1 7.500-1.500M22 17a4 4 0 0 1-7.500 1.500" fill="none" stroke="#1273cf" strokeWidth="1.700" /><path d="M19.500 15.500h3.500v-3.500zM16.500 17.500H13V21z" fill="#1273cf" /></svg>
        <Svg w={26} h={22} c="#fff" sw={1.500} className="ml-[10px]"><path d="M8 5.500h14.500v12H5.500V12" /><path d="M10 8h10.500v7.500H8V11z" fill="#fff" stroke="none" /><path d="M23 9h2v5h-2" /><path d="M2.500 1v3M6 1v3M1 4h6.500v3a2 2 0 0 1-2 2H3a2 2 0 0 1-2-2zM4.200 9v5" /></Svg>
        <Svg w={22} h={22} c="#d5d8da" sw={1.500} className="ml-[13px]"><path d="M2 21A18.500 18.500 0 0 1 19 2M7 21A13.500 13.500 0 0 1 19 7.500M11.500 21A9 9 0 0 1 19 12.500" /><circle cx="17.500" cy="19" r="1.800" fill="#fff" stroke="none" /></Svg>
        <Svg w={26} h={22} c="#fff" sw={1.500} className="ml-[11px]"><path d="M1 7.500h4l5.500-5v17L5 14.500H1zM14 7.500q2 3.500 0 7M17.500 5q3.500 6 0 12M21 2.500q5 8.500 0 17" /></Svg>
        <div className="ml-[14px] w-[46px] text-[17.500px] tracking-[-0.500px]">ENG</div>
        <div className="w-[110px] text-center text-[17px] leading-[27px] tracking-[-0.300px]">
          <div>05:22 PM</div>
          <div>08-10-2023</div>
        </div>
        <div className="relative ml-[19px]">
          <Svg w={24} h={30} c="none" fill="#fff"><path d="M0 2h24v20H11l-5 6v-6H0z" /><path d="M5 7.500h14M5 12h14M5 16.500h9" stroke="#26343c" strokeWidth="1.500" /></Svg>
          <div className="absolute left-[9px] top-[12px] flex h-[28px] w-[28px] items-center justify-center rounded-full border border-[#a5a5a5] bg-[#333] text-[17px] font-semibold leading-none tracking-tight">22</div>
        </div>
        <div className="ml-[32px] h-[60px] w-px bg-[#6a767c]" />
      </div>
    </div>
  );
}

export default function App() {
  return (
    <div className="flex h-[1080px] w-[1920px] flex-col overflow-hidden bg-white">
      <TitleBar />
      <MenuBar />
      <Toolbar />
      <div className="flex h-[819px] shrink-0">
        <Sidebar />
        <StoryView />
        <VScroll />
      </div>
      <Tabs />
      <Status />
      <Taskbar />
    </div>
  );
}
